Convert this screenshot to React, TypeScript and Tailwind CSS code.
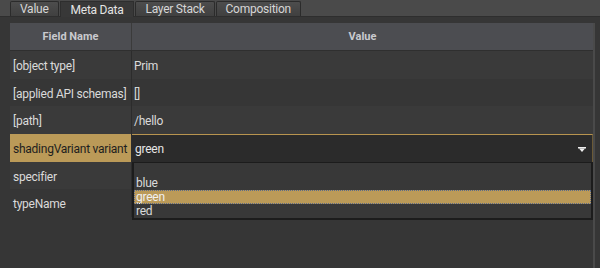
import React from "react";

const rows = [
  { name: "[object type]", value: "Prim" },
  { name: "[applied API schemas]", value: "[]" },
  { name: "[path]", value: "/hello" },
  { name: "shadingVariant variant", value: "green", combo: true },
  { name: "specifier", value: "" },
  { name: "typeName", value: "" },
];

function Tab({ label, active }: { label: string; active?: boolean }) {
  if (active) {
    return (
      <div className="h-[16px] px-[10px] flex items-center bg-[#383838] text-[#e4e4e4] border-x border-t border-[#2e2e2e] -mb-[1px] relative">
        {label}
      </div>
    );
  }
  return (
    <div className="h-[15px] px-[9px] flex items-center bg-gradient-to-b from-[#4d4d4d] to-[#404040] text-[#d6d6d6] border border-[#2b2b2b] border-b-0 rounded-t-[2px]">
      {label}
    </div>
  );
}

export default function App() {
  return (
    <div
      className="w-[600px] h-[268px] overflow-hidden bg-[#393939] text-[12px] tracking-[-0.25px] leading-none text-[#dadada] flex flex-col"
      style={{ fontFamily: "Roboto, 'Liberation Sans', sans-serif" }}
    >
      <div className="h-[17px] bg-[#4a4a4a] pl-[10px] flex items-end gap-[1px] border-b border-[#2e2e2e]">
        <Tab label="Value" />
        <Tab label="Meta Data" active />
        <Tab label="Layer Stack" />
        <Tab label="Composition" />
      </div>
      <div className="flex-1 bg-[#363636] pt-[6px] pl-[10px] pr-[5px]">
        <div className="border-r-2 border-[#4a4a4a] h-full">
          <div className="grid grid-cols-[122px_1fr] h-[28px] bg-[#4c4d51] font-bold text-[11px] tracking-normal text-[#c9cace] border-b border-[#2f2f2f]">
            <div className="flex items-center justify-center border-r border-[#3b3b3b]">Field Name</div>
            <div className="flex items-center justify-center">Value</div>
          </div>
          {rows.map((r, i) => (
            <div
              key={r.name}
              className={`grid grid-cols-[122px_1fr] h-[27.7px] ${i % 2 === 0 ? "bg-[#3a3a3a]" : "bg-[#363636]"}`}
            >
              <div
                className={`flex items-center pl-[3px] pt-[2px] whitespace-nowrap overflow-hidden border-r border-[#2c2c2c] ${
                  r.combo ? "bg-[#bb9a58] text-[#1e1e1e]" : ""
                }`}
              >
                {r.name}
              </div>
              {r.combo ? (
                <div className="relative">
                  <div className="h-full flex items-center justify-between pl-[3px] pt-[2px] pr-[6px] bg-[#2b2b2b] border-t border-[#b8944f] border-r border-r-[#6b5a37] text-[#e6e6e6]">
                    <span>{r.value}</span>
                    <svg width="8" height="5" viewBox="0 0 8 5">
                      <rect x="0" y="0" width="8" height="1.5" fill="#eeeeee" />
                      <polygon points="1,1.5 7,1.5 4,5" fill="#eeeeee" />
                    </svg>
                  </div>
                  <div className="absolute left-0 top-[28px] w-[461px] h-[58px] bg-[#383838] border-2 border-[#1c1c1c] border-t-[1px] pt-[13px] z-10 flex flex-col">
                    <div className="h-[14px] flex items-center pl-[2px]">blue</div>
                    <div className="h-[14px] flex items-center pl-[2px] bg-[#bb9a58] text-[#f0f0f0] outline-1 outline-dotted outline-[#5b6b8a] -outline-offset-1">
                      green
                    </div>
                    <div className="h-[14px] flex items-center pl-[2px]">red</div>
                  </div>
                </div>
              ) : (
                <div className="flex items-center pl-[2px] pt-[2px]">{r.value}</div>
              )}
            </div>
          ))}
        </div>
      </div>
    </div>
  );
}
